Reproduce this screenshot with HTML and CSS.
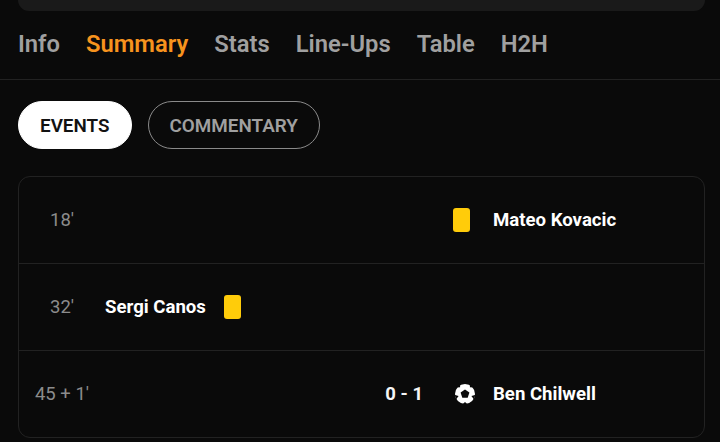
FILE: index.html
```html
<!DOCTYPE html>
<html lang="en">
<head>
<meta charset="utf-8">
<title>Match summary</title>
<link rel="stylesheet" href="styles.css">
</head>
<body>
<div class="topbar"></div>
<nav class="tabs">
  <span class="tab">Info</span>
  <span class="tab active">Summary</span>
  <span class="tab">Stats</span>
  <span class="tab">Line-Ups</span>
  <span class="tab">Table</span>
  <span class="tab">H2H</span>
</nav>
<div class="pills">
  <span class="pill pill-on">EVENTS</span>
  <span class="pill">COMMENTARY</span>
</div>
<section class="card">
  <div class="row">
    <span class="time">18'</span>
    <div class="home"></div>
    <div class="away">
      <span class="icon"><i class="yellow"></i></span>
      <span class="name">Mateo Kovacic</span>
    </div>
  </div>
  <div class="row">
    <span class="time">32'</span>
    <div class="home">
      <span class="name">Sergi Canos</span>
      <i class="yellow"></i>
    </div>
    <div class="away"></div>
  </div>
  <div class="row">
    <span class="time">45 + 1'</span>
    <div class="home home-score"><span class="score">0 - 1</span></div>
    <div class="away">
      <span class="icon">
        <svg class="ball" viewBox="0 0 20 20" aria-hidden="true">
          <circle cx="10" cy="10" r="10" fill="#fff"/>
          <path d="M10 5.4 14.4 8.6 12.7 13.7H7.3L5.6 8.6Z" fill="#0a0a0a"/>
          <path d="M14.9 3.3 15 -0.2 19 3.6ZM16.4 12.1 20.2 11 19 15.4ZM10 17.9 12.6 20.4H7.4ZM3.6 12.1 -0.2 11 1 15.4ZM5.1 3.3 5 -0.2 1 3.6Z" fill="#0a0a0a"/>
        </svg>
      </span>
      <span class="name">Ben Chilwell</span>
    </div>
  </div>
</section>
</body>
</html>
```

FILE: styles.css
```css
* { box-sizing: border-box; }
html, body { margin: 0; height: 442px; overflow: hidden; }
body {
  background: #0a0a0a;
  font-family: Roboto, "Liberation Sans", sans-serif;
  color: #fff;
}
.topbar {
  height: 11px;
  margin: 0 15px 0 18px;
  background: #1a1a1a;
  border-radius: 0 0 12px 12px;
}
.tabs {
  display: flex;
  gap: 26px;
  align-items: center;
  height: 69px;
  padding: 0 18px 2px;
  border-bottom: 1px solid #222;
  font-size: 23.75px;
  font-weight: 600;
  color: #a0a0a0;
}
.tab.active { color: #f7931e; }
.pills {
  display: flex;
  gap: 16px;
  padding: 21px 18px 0;
}
.pill {
  display: flex;
  align-items: center;
  justify-content: center;
  height: 48px;
  padding: 1px 21px 0;
  border: 1px solid #8a8a8a;
  border-radius: 24px;
  font-size: 18.85px;
  font-weight: 600;
  color: #a0a0a0;
}
.pill-on {
  background: #fff;
  border-color: #fff;
  color: #121212;
}
.card {
  margin: 27px 15px 0 18px;
  height: 262px;
  border: 1px solid #222;
  border-radius: 12px;
}
.row {
  display: flex;
  align-items: center;
  height: 87px;
  padding-bottom: 1px;
  border-bottom: 1px solid #222;
}
.row:last-child { border-bottom: 0; }
.time {
  width: 86px;
  text-align: center;
  font-size: 18.5px;
  color: #8c8c8c;
}
.home {
  display: flex;
  align-items: center;
  gap: 18px;
  width: 347px;
}
.home-score {
  justify-content: flex-end;
  padding-right: 29px;
}
.away { display: flex; align-items: center; }
.icon {
  display: flex;
  width: 41px;
}
.name {
  font-size: 18.6px;
  font-weight: 700;
  color: #fff;
}
.score {
  font-size: 18.5px;
  font-weight: 700;
  color: #f5f5f5;
}
.yellow {
  display: block;
  width: 17px;
  height: 24px;
  background: #ffcc0a;
  border-radius: 3px;
}
.icon .yellow { margin-left: 1px; }
.ball {
  display: block;
  width: 20px;
  height: 20px;
  margin-left: 3px;
}
```
